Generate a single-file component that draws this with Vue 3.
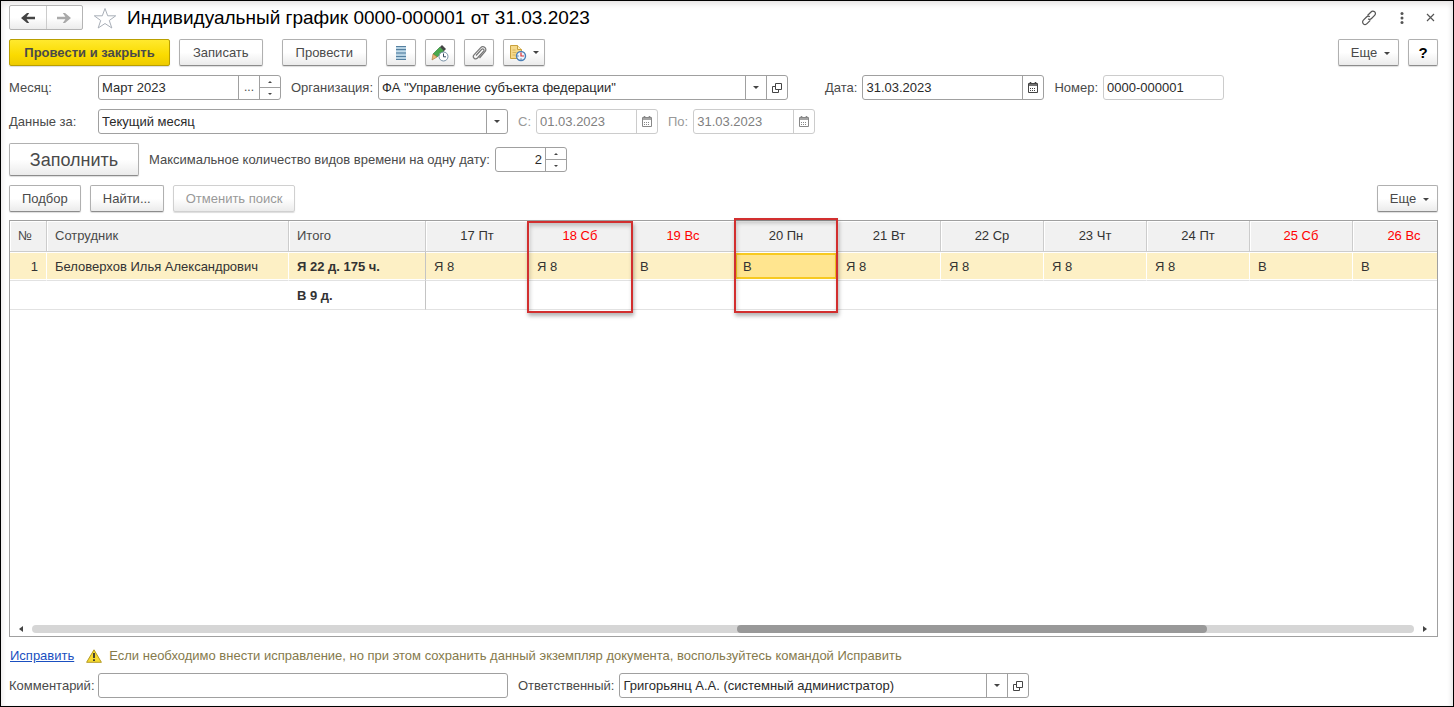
<script setup>
import { ref } from 'vue'

const month = ref('Март 2023')
const organization = ref('ФА "Управление субъекта федерации"')
const date = ref('31.03.2023')
const number = ref('0000-000001')
const period = ref('Текущий месяц')
const from = ref('01.03.2023')
const to = ref('31.03.2023')
const maxKinds = ref('2')
const comment = ref('')
const responsible = ref('Григорьянц А.А. (системный администратор)')

const days = [
  { title: '17 Пт', value: 'Я 8' },
  { title: '18 Сб', value: 'Я 8', off: true },
  { title: '19 Вс', value: 'В', off: true },
  { title: '20 Пн', value: 'В', selected: true },
  { title: '21 Вт', value: 'Я 8' },
  { title: '22 Ср', value: 'Я 8' },
  { title: '23 Чт', value: 'Я 8' },
  { title: '24 Пт', value: 'Я 8' },
  { title: '25 Сб', value: 'В', off: true },
  { title: '26 Вс', value: 'В', off: true }
]
</script>

<template>
  <main class="window">
    <header class="titlebar">
      <div class="history">
        <button type="button" aria-label="Назад">
          <svg width="16" height="12" viewBox="0 0 16 12"><path d="M1 6 7 1h2.200L6.600 4.800H15v2.400H6.600L9.200 11H7z" fill="#444" /></svg>
        </button>
        <button type="button" aria-label="Вперед">
          <svg width="16" height="12" viewBox="0 0 16 12"><path d="M15 6 9 1H6.800l2.600 3.800H1v2.400h8.400L6.800 11H9z" fill="#aaa" /></svg>
        </button>
      </div>
      <button type="button" class="bare star" aria-label="В избранное">
        <svg width="24" height="22" viewBox="0 0 24 22"><path d="m12 1.500 2.700 7.300h8L16.300 13.500l2.500 7.500L12 16.500 5.200 21l2.500-7.500L1.300 8.800h8z" fill="#fff" stroke="#a9afb8" /></svg>
      </button>
      <h1>Индивидуальный график 0000-000001 от 31.03.2023</h1>
      <div class="window-tools">
        <button type="button" class="bare" aria-label="Ссылка">
          <svg width="18" height="18" viewBox="0 0 18 18"><g fill="none" stroke="#555" stroke-width="1.200"><path d="M7.500 6.500 11 3c1-1.200 2.500-1.200 3.600-.2s1.100 2.500 0 3.600L11.500 9.500c-1 1-2.400 1-3.300.2" /><path d="M10.300 11.300 7 14.700c-1.100 1.100-2.600 1.100-3.600.1s-1.100-2.500 0-3.600L6.500 8c1-1 2.400-1 3.300-.2" /></g></svg>
        </button>
        <button type="button" class="bare" aria-label="Меню">
          <svg width="4" height="14" viewBox="0 0 4 14"><g fill="#555"><circle cx="2" cy="2.500" r="1.500" /><circle cx="2" cy="7" r="1.500" /><circle cx="2" cy="11.500" r="1.500" /></g></svg>
        </button>
        <button type="button" class="bare" aria-label="Закрыть">
          <svg width="9" height="9" viewBox="0 0 9 9"><path d="m1 1 7 7M8 1 1 8" stroke="#555" stroke-width="1.200" /></svg>
        </button>
      </div>
    </header>

    <div class="bar">
      <button type="button" class="btn primary">Провести и закрыть</button>
      <button type="button" class="btn">Записать</button>
      <button type="button" class="btn group">Провести</button>
      <button type="button" class="btn icon group" aria-label="Список">
        <svg width="12" height="16" viewBox="0 0 12 16"><path d="M1 1h10v14H1z" fill="#a9c8dc" /><path d="M1 1.500h10M1 4.500h10M1 8h10M1 11.500h10M1 14.500h10" stroke="#5580a0" /><path d="M1 3h10M1 6.500h10M1 10h10M1 13h10" stroke="#c3dbe9" /></svg>
      </button>
      <button type="button" class="btn icon" aria-label="Изменить">
        <svg width="18" height="18" viewBox="0 0 18 18"><path d="m2 10 7-7 4 4-7 6z" fill="#4aa84d" stroke="#27752c" stroke-width=".6" /><path d="m9 3 2-2 4 4-2 2z" fill="#454545" /><path d="m2 10 4 3-5 3z" fill="#e9b878" stroke="#a86e35" stroke-width=".6" /><circle cx="12.500" cy="12.500" r="4.500" fill="#fff" stroke="#7690a5" /><path d="M12.500 9.500v3.300h2.500" fill="none" stroke="#34495c" /></svg>
      </button>
      <button type="button" class="btn icon" aria-label="Присоединить файл">
        <svg width="16" height="16" viewBox="0 0 16 16"><path d="m5 10.500 5.500-6c1.500-1.400 3.300.3 2.100 1.700L6.500 13c-2.300 2.300-5.600-.6-3.500-3.100l6.500-7.100c2.800-3 7.200.8 4.500 3.900L8.500 13" fill="none" stroke="#777" stroke-width="1.200" /></svg>
      </button>
      <button type="button" class="btn icon wide" aria-label="Отчеты">
        <svg width="18" height="18" viewBox="0 0 18 18"><path d="M1.500 1.500h7l4 4v9h-11z" fill="#f5d98a" stroke="#c9a13d" /><path d="M8.500 1.500v4h4" fill="#fff0bd" stroke="#c9a13d" /><path d="M3.500 6h3M3.500 8.500h4M3.500 11h3" stroke="#d8b55c" /><circle cx="12" cy="12" r="4.500" fill="#edf5ff" stroke="#4b7fb5" stroke-width="1.400" /><path d="M12 8.500V12h3" fill="none" stroke="#d33" stroke-width="1.200" /><path d="M12 14.500v1M8.500 12h1" stroke="#246" /></svg>
        <i class="caret"></i>
      </button>
      <button type="button" class="btn more end">Еще<i class="caret"></i></button>
      <button type="button" class="btn icon help">?</button>
    </div>

    <div class="row">
      <label class="first" for="month">Месяц:</label>
      <div class="field month">
        <input id="month" v-model="month" type="text">
        <button type="button" class="dots" aria-label="Выбрать месяц">...</button>
        <div class="spin">
          <button type="button" aria-label="Больше"><i class="up"></i></button>
          <button type="button" aria-label="Меньше"><i class="down"></i></button>
        </div>
      </div>
      <label class="next" for="org">Организация:</label>
      <div class="field long">
        <input id="org" v-model="organization" type="text">
        <button type="button" aria-label="Выбрать организацию"><i class="caret"></i></button>
        <button type="button" aria-label="Открыть организацию">
          <svg width="10" height="10" viewBox="0 0 10 10"><path d="M3.500.5h6v6h-6zM3 3.500H.5v6h6V7" fill="none" stroke="#444" /></svg>
        </button>
      </div>
      <label class="next far" for="date">Дата:</label>
      <div class="field date">
        <input id="date" v-model="date" type="text">
        <button type="button" aria-label="Календарь">
          <svg width="10" height="11" viewBox="0 0 10 11"><path d="M.5 1.500h9v9h-9z" fill="#fff" stroke="#444" /><path d="M0 3h10M2.500 0v2M7.500 0v2" stroke="#444" stroke-width="1.600" /><path d="M2 6.500h6M2 8.500h6" stroke="#444" stroke-dasharray="1 1" /></svg>
        </button>
      </div>
      <label class="next" for="number">Номер:</label>
      <div class="field number light"><input id="number" v-model="number" type="text"></div>
    </div>

    <div class="row">
      <label class="first" for="period">Данные за:</label>
      <div class="field long">
        <select id="period" v-model="period"><option>Текущий месяц</option></select>
        <span class="drop"><i class="caret"></i></span>
      </div>
      <label class="next muted" for="from">С:</label>
      <div class="field short light">
        <input id="from" v-model="from" type="text" disabled>
        <button type="button" disabled aria-label="Календарь начала">
          <svg width="10" height="11" viewBox="0 0 10 11"><path d="M.5 1.500h9v9h-9z" fill="#fff" stroke="#888" /><path d="M0 3h10M2.500 0v2M7.500 0v2" stroke="#888" stroke-width="1.600" /><path d="M2 6.500h6M2 8.500h6" stroke="#888" stroke-dasharray="1 1" /></svg>
        </button>
      </div>
      <label class="next muted" for="to">По:</label>
      <div class="field short light">
        <input id="to" v-model="to" type="text" disabled>
        <button type="button" disabled aria-label="Календарь окончания">
          <svg width="10" height="11" viewBox="0 0 10 11"><path d="M.5 1.500h9v9h-9z" fill="#fff" stroke="#888" /><path d="M0 3h10M2.500 0v2M7.500 0v2" stroke="#888" stroke-width="1.600" /><path d="M2 6.500h6M2 8.500h6" stroke="#888" stroke-dasharray="1 1" /></svg>
        </button>
      </div>
    </div>

    <div class="row">
      <button type="button" class="btn fill">Заполнить</button>
      <label class="next" for="kinds">Максимальное количество видов времени на одну дату:</label>
      <div class="field kinds">
        <input id="kinds" v-model="maxKinds" type="text">
        <div class="spin">
          <button type="button" aria-label="Больше"><i class="up"></i></button>
          <button type="button" aria-label="Меньше"><i class="down"></i></button>
        </div>
      </div>
    </div>

    <div class="bar list-bar">
      <button type="button" class="btn">Подбор</button>
      <button type="button" class="btn">Найти...</button>
      <button type="button" class="btn" disabled>Отменить поиск</button>
      <button type="button" class="btn more end">Еще<i class="caret"></i></button>
    </div>

    <section class="sheet">
      <div class="grid">
        <table>
          <colgroup>
            <col class="c-num"><col class="c-name"><col class="c-total">
            <col v-for="d in days" :key="d.title" class="c-day">
          </colgroup>
          <thead>
            <tr>
              <th>№</th>
              <th>Сотрудник</th>
              <th>Итого</th>
              <th v-for="d in days" :key="d.title" class="day" :class="{ off: d.off }">{{ d.title }}</th>
            </tr>
          </thead>
          <tbody>
            <tr class="current">
              <td class="num">1</td>
              <td>Беловерхов Илья Александрович</td>
              <td class="total">Я 22 д. 175 ч.</td>
              <td v-for="d in days" :key="d.title" :class="{ selected: d.selected }">{{ d.value }}</td>
            </tr>
            <tr>
              <td></td>
              <td></td>
              <td class="total">В 9 д.</td>
              <td v-for="d in days" :key="d.title"></td>
            </tr>
          </tbody>
        </table>
      </div>
      <div class="scroll">
        <button type="button" class="bare" aria-label="Влево"><i class="left"></i></button>
        <div class="track"><div class="thumb"></div></div>
        <button type="button" class="bare" aria-label="Вправо"><i class="right"></i></button>
      </div>
      <div class="mark saturday"></div>
      <div class="mark monday"></div>
    </section>

    <div class="notice">
      <a href="#">Исправить</a>
      <svg width="16" height="14" viewBox="0 0 16 14"><path d="M8 .8 15.400 13.300H.6z" fill="#f7da2f" stroke="#b39a26" stroke-linejoin="round" /><path d="M8 4v5M8 10.200v1.800" stroke="#333" stroke-width="1.800" /></svg>
      <span>Если необходимо внести исправление, но при этом сохранить данный экземпляр документа, воспользуйтесь командой Исправить</span>
    </div>

    <div class="row">
      <label class="first" for="comment">Комментарий:</label>
      <div class="field long"><input id="comment" v-model="comment" type="text"></div>
      <label class="next" for="resp">Ответственный:</label>
      <div class="field long">
        <input id="resp" v-model="responsible" type="text">
        <button type="button" aria-label="Выбрать ответственного"><i class="caret"></i></button>
        <button type="button" aria-label="Открыть ответственного">
          <svg width="10" height="10" viewBox="0 0 10 10"><path d="M3.500.5h6v6h-6zM3 3.500H.5v6h6V7" fill="none" stroke="#444" /></svg>
        </button>
      </div>
    </div>
  </main>
</template>

<style>
body { margin: 0; }
</style>

<style scoped>
* { box-sizing: border-box; }
.window {
  display: flex;
  flex-direction: column;
  min-height: 100vh;
  padding: 4px 15px 8px 8px;
  border: 1px solid #000;
  background: #fff;
  box-shadow: inset 0 7px 6px -4px #e4e2e2, inset -4px 0 4px -2px #e8e8e8, inset 4px 0 4px -2px #f0eeee;
  color: #4a4a4a;
  font: 13px/16px "Liberation Sans", Arial, sans-serif;
}
button, input, select { margin: 0; font: inherit; color: inherit; }
button { padding: 0; border: 0; background: none; display: flex; align-items: center; justify-content: center; white-space: nowrap; }
.titlebar { display: flex; align-items: center; height: 25px; }
.history {
  display: flex; width: 74px; height: 25px;
  border: 1px solid #b4b4b4; border-radius: 2px;
  background: linear-gradient(#fff 50%, #ececec);
}
.history button { flex: 1; }
.history button + button { border-left: 1px solid #ccc; }
.star { margin-left: 10px; }
h1 { flex: 1; min-width: 0; margin: 0 0 0 10px; font-size: 19px; line-height: 24px; font-weight: 400; color: #000; }
.window-tools { display: flex; align-items: center; gap: 22px; padding-right: 3px; }

.bar { display: flex; gap: 9px; margin-top: 9px; }
.btn {
  height: 27px; padding: 0 13px;
  border: 1px solid #b0b0b0; border-bottom-color: #8c8c8c; border-radius: 2px;
  background: linear-gradient(#fff 50%, #ebebeb);
  box-shadow: 0 1px 1px #ddd;
}
.list-bar .btn { padding: 0 12px; }
.btn:disabled { color: #999; border-color: #d0d0d0; }
.primary { min-width: 161px; border-color: #b99f00; background: linear-gradient(#ffe92e, #fadb00 60%, #eecb00); font-weight: 700; }
.group { margin-left: 10px; }
.icon { width: 30px; padding: 0; }
.wide { width: 42px; gap: 6px; }
.bar .more { width: 61px; gap: 7px; padding: 0 0 0 4px; }
.more .caret { margin-top: 2px; }
.end { margin-left: auto; }
.help { color: #000; font-size: 15px; font-weight: 700; }
.fill { width: 130px; height: 33px; font-size: 18px; }

.caret, .up, .down, .left, .right { display: block; width: 0; height: 0; border: 3px solid transparent; }
.caret { border-top-color: #444; border-bottom: 0; }
.up { border-width: 2px; border-bottom-color: #444; border-top: 0; }
.down { border-width: 2px; border-top-color: #444; border-bottom: 0; }
.left { border-width: 3px; border-right: 4px solid #444; border-left: 0; }
.right { border-width: 3px; border-left: 4px solid #444; border-right: 0; }

.row { display: flex; align-items: center; margin-top: 9px; }
.row label { white-space: nowrap; }
.first { width: 89px; flex: none; }
.next { margin: 0 5px 0 10px; }
.far { margin-left: 37px; }
.muted { color: #999; }
.field {
  position: relative; display: flex; height: 25px; min-width: 0;
  border: 1px solid #a0a0a0; border-radius: 3px; background: #fff;
}
.field input, .field select {
  flex: 1; width: 100%; min-width: 0; padding: 0 3px; border: 0; outline: 0;
  background: none; color: #2a2a2a; appearance: none;
}
.field button, .drop { flex: none; width: 21px; border-left: 1px solid #a0a0a0; }
.field input:disabled { color: #808080; }
.drop { position: absolute; right: 0; top: 0; bottom: 0; display: flex; align-items: center; justify-content: center; pointer-events: none; }
.light, .light button { border-color: #ccc; }
.field .dots { align-items: flex-start; font-size: 12px; padding-top: 3px; }
.spin { display: flex; flex-direction: column; flex: none; width: 21px; border-left: 1px solid #a0a0a0; }
.spin button { flex: 1; width: auto; border-left: 0; }
.spin button + button { border-top: 1px solid #a0a0a0; }
.month { flex: 0 1 183px; }
.long { flex: 0 1 410px; }
.date { flex: 0 1 182px; }
.number { flex: 0 1 121px; }
.short { flex: 0 1 122px; }
.kinds { flex: 0 1 72px; }
.kinds input { text-align: right; }

.sheet { position: relative; flex: 1; display: flex; flex-direction: column; min-height: 180px; margin-top: 8px; border: 1px solid #a0a0a0; }
.grid { flex: 1; overflow: hidden; }
table { width: 1446px; table-layout: fixed; border-collapse: separate; border-spacing: 0; color: #333; }
.c-num { width: 37px; }
.c-name { width: 242px; }
.c-total { width: 137px; }
.c-day { width: 103px; }
th, td { padding: 0 8px; text-align: left; white-space: nowrap; }
th {
  height: 31px; font-weight: 400; color: #4a4a4a; background: #f1f1f1;
  border-right: 1px solid #ccc; border-bottom: 1px solid #ccc; box-shadow: inset 1px 1px #fff;
}
th.day { text-align: center; color: #333; }
th.off { color: #f00; }
td { height: 29px; padding-top: 1px; border-bottom: 1px solid #e2e2e2; }
td.num { text-align: right; }
td.total { font-weight: 700; border-right: 1px solid #c4c4c4; }
.current td { background: #fdf0c5; border-right: 1px solid #fff; box-shadow: inset 0 1px #fff, inset 0 -1px #fff; }
.current td.total { border-right-color: #c4c4c4; }
.current td.selected { background: #ffe58f; box-shadow: inset 0 1px #fff, inset 0 -1px #fff, inset 2px 3px #f7c920, inset -2px -3px #f7c920; }

.scroll { display: flex; align-items: center; gap: 9px; height: 15px; padding: 0 10px 0 9px; }
.track { flex: 1; height: 8px; border-radius: 4px; background: #d6d6d6; }
.thumb { width: 34%; height: 8px; margin-left: 51%; border-radius: 4px; background: #999; }
.mark { position: absolute; border: 2px solid #d22f2f; box-shadow: 1px 3px 4px rgba(0, 0, 0, .3), inset 1px 3px 4px rgba(0, 0, 0, .2); pointer-events: none; }
.saturday { left: 517px; top: 0; width: 106px; height: 92px; }
.monday { left: 724px; top: -3px; width: 104px; height: 95px; }

.notice { display: flex; align-items: center; margin-top: 10px; height: 17px; padding-left: 1px; color: #857a4c; }
.notice a { color: #1a4fc0; }
.notice svg { flex: none; margin: 0 7px 0 12px; }
</style>
